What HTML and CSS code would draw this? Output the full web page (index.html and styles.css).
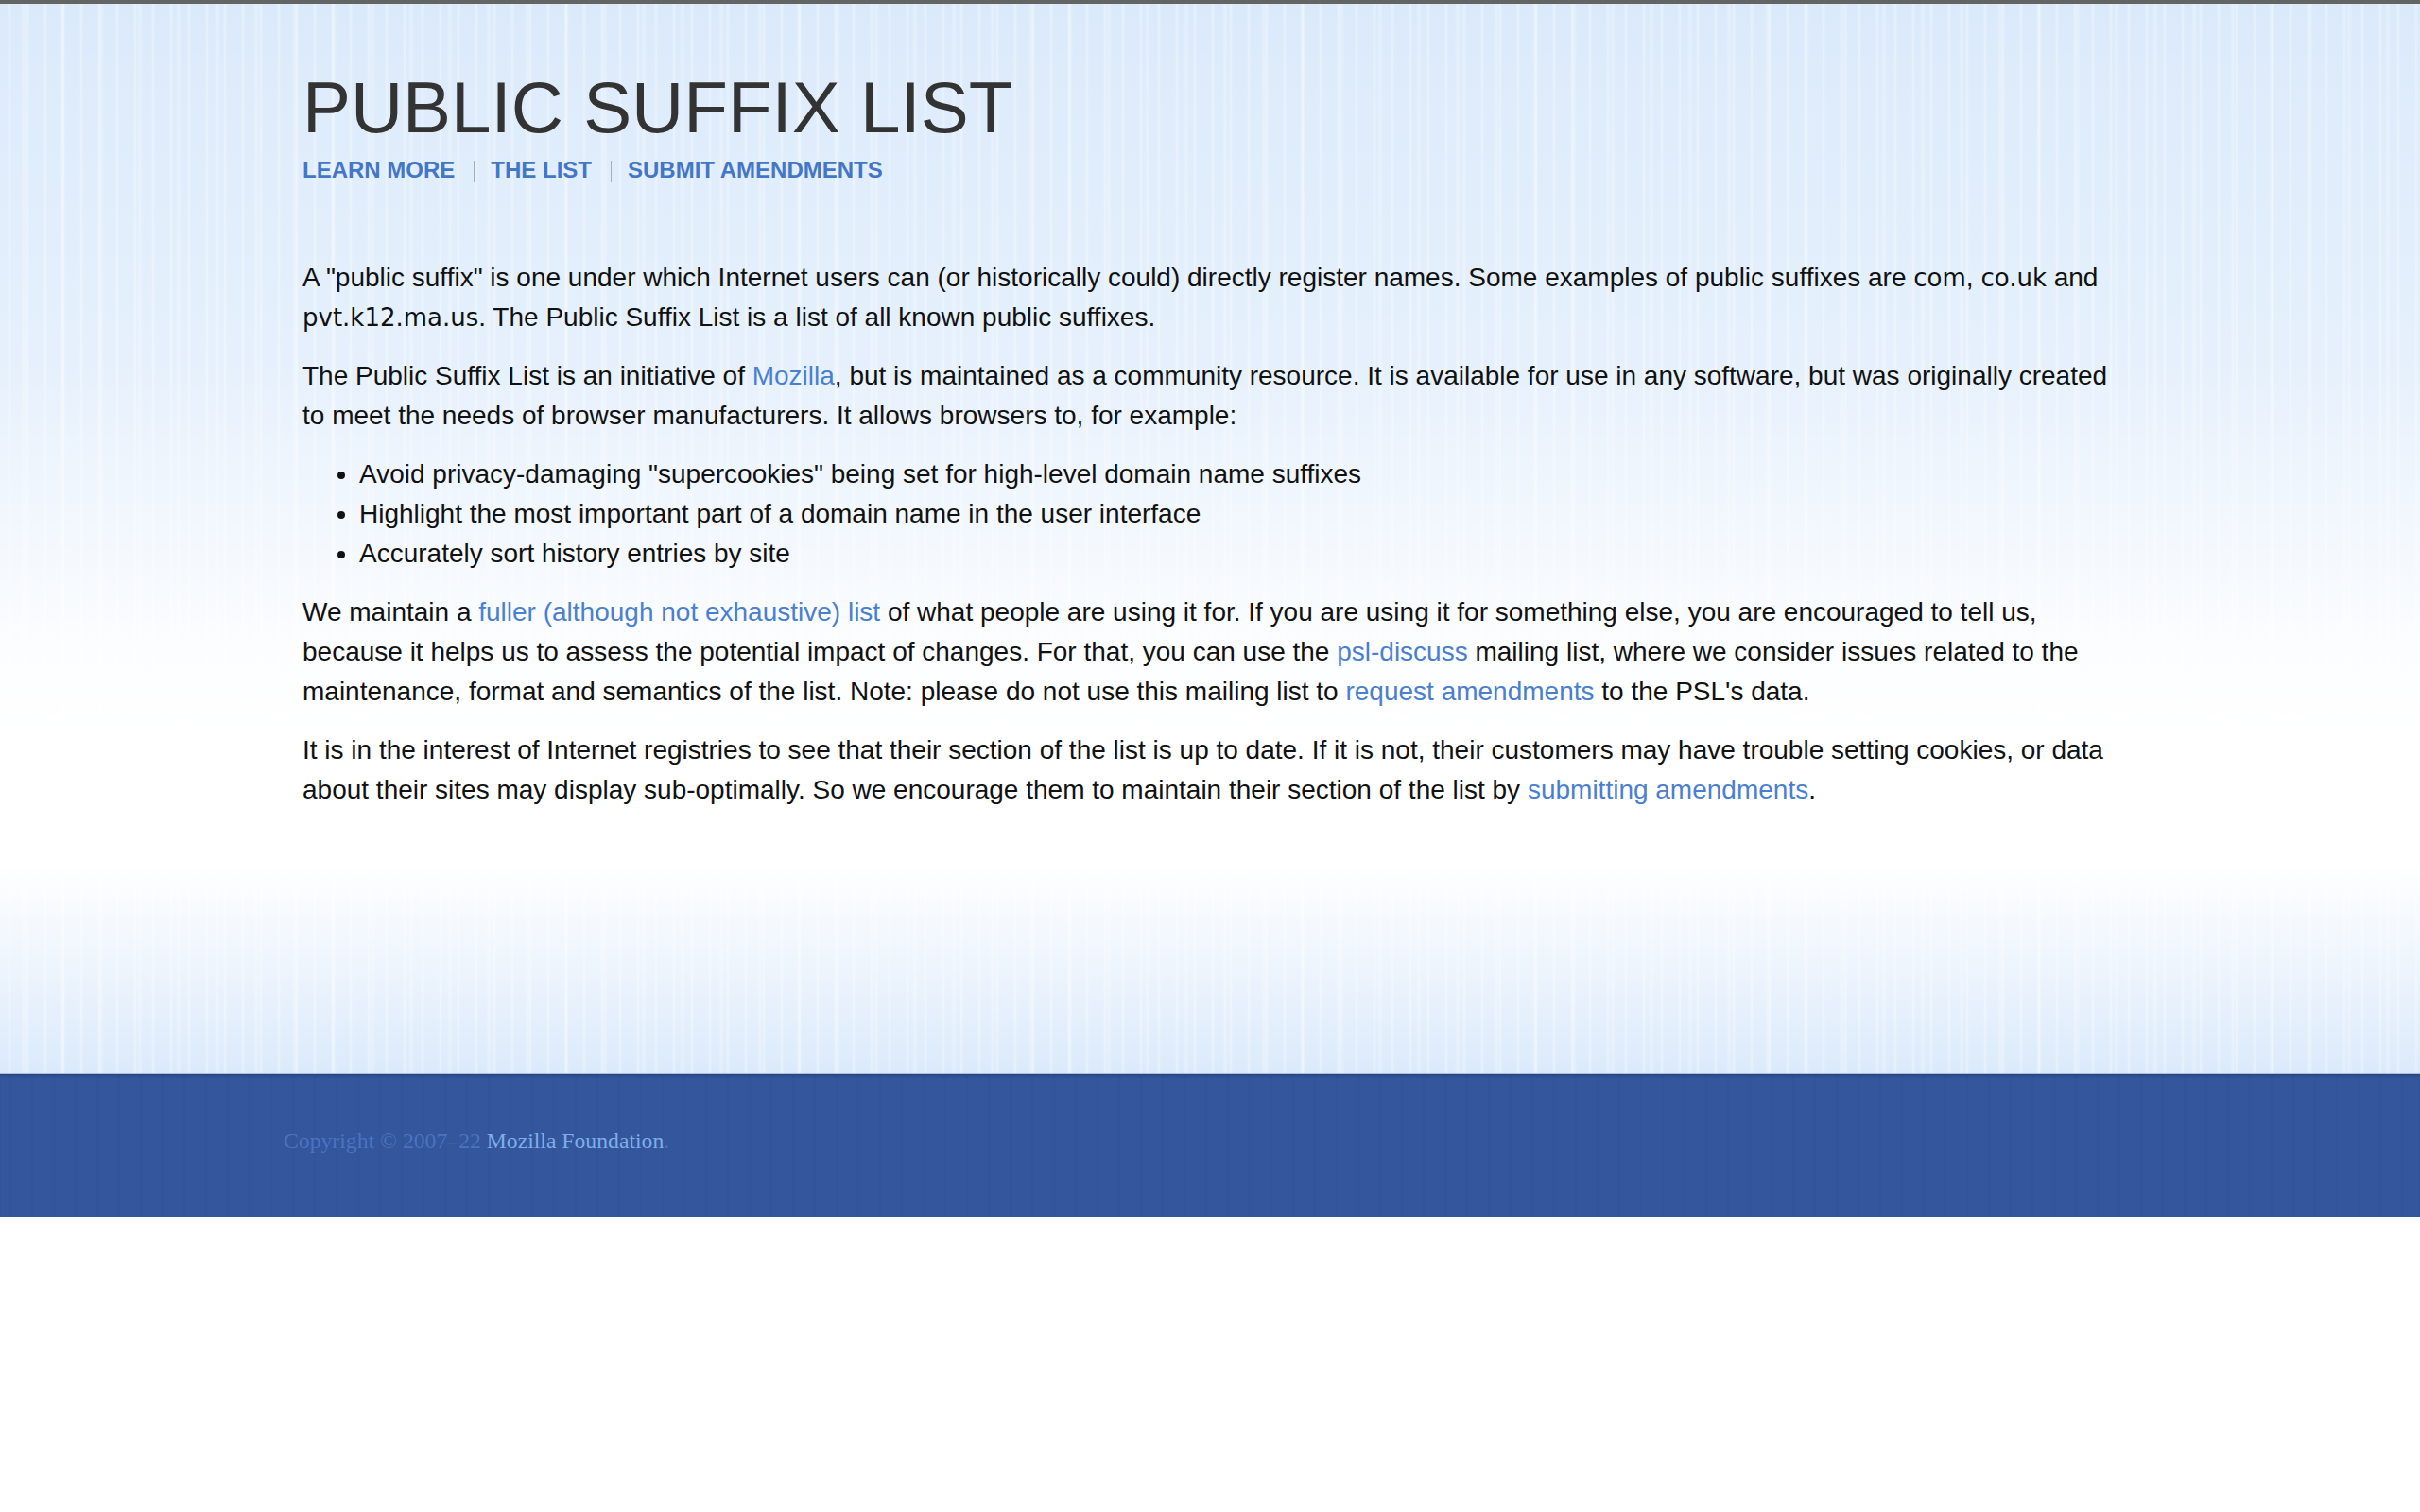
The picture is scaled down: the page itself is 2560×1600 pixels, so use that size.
FILE: index.html
```html
<!DOCTYPE html>
<html lang="en">
<head>
    <meta charset="UTF-8">
    <title>Public Suffix List</title>
    <link rel="stylesheet" href="styles.css">
</head>
<body>
<div class="page">
    <div class="wrap">
        <div class="masthead">
            <h1>PUBLIC SUFFIX LIST</h1>
            <ul class="nav">
                <li><a href="#learn">LEARN MORE</a></li>
                <li><a href="#list">THE LIST</a></li>
                <li><a href="#submit">SUBMIT AMENDMENTS</a></li>
            </ul>
        </div>
        <div class="content">
            <p>A "public suffix" is one under which Internet users can (or historically could) directly register names. Some examples of public suffixes are <code>com</code>, <code>co.uk</code> and <code>pvt.k12.ma.us</code>. The Public Suffix List is a list of all known public suffixes.</p>
            <p>The Public Suffix List is an initiative of <a href="#mozilla">Mozilla</a>, but is maintained as a community resource. It is available for use in any software, but was originally created to meet the needs of browser manufacturers. It allows browsers to, for example:</p>
            <ul>
                <li>Avoid privacy-damaging "supercookies" being set for high-level domain name suffixes</li>
                <li>Highlight the most important part of a domain name in the user interface</li>
                <li>Accurately sort history entries by site</li>
            </ul>
            <p>We maintain a <a href="#learn">fuller (although not exhaustive) list</a> of what people are using it for. If you are using it for something else, you are encouraged to tell us, because it helps us to assess the potential impact of changes. For that, you can use the <a href="#discuss">psl-discuss</a> mailing list, where we consider issues related to the maintenance, format and semantics of the list. Note: please do not use this mailing list to <a href="#submit">request amendments</a> to the PSL's data.</p>
            <p>It is in the interest of Internet registries to see that their section of the list is up to date. If it is not, their customers may have trouble setting cookies, or data about their sites may display sub-optimally. So we encourage them to maintain their section of the list by <a href="#submit">submitting amendments</a>.</p>
        </div>
    </div>
</div>
<div class="footer">
    <div class="footer-inner">
        <p>Copyright &copy; 2007&ndash;22 <a href="#mozilla">Mozilla Foundation</a>.</p>
    </div>
</div>
</body>
</html>
```

FILE: styles.css
```css
html, body {
    margin: 0;
    padding: 0;
    background-color: #ffffff;
}

body {
    font-family: "Liberation Sans", Arial, sans-serif;
    font-size: 28px;
    line-height: 42px;
    color: #111111;
}

a {
    color: #4a7fd0;
    text-decoration: none;
}

.page {
    border-top: 4px solid #646464;
    background:
        linear-gradient(to bottom, rgba(255, 255, 255, 0) 0, rgba(255, 255, 255, 0.3) 380px, rgba(255, 255, 255, 0.92) 690px, #ffffff 780px, #ffffff 910px, rgba(255, 255, 255, 0) 100%),
        repeating-linear-gradient(90deg, rgba(255, 255, 255, 0) 0, rgba(255, 255, 255, 0) 8px, rgba(255, 255, 255, 0.38) 10px, rgba(255, 255, 255, 0) 12px, rgba(255, 255, 255, 0) 19px),
        repeating-linear-gradient(90deg, rgba(255, 255, 255, 0) 0, rgba(255, 255, 255, 0) 22px, rgba(255, 255, 255, 0.3) 25px, rgba(255, 255, 255, 0) 28px, rgba(255, 255, 255, 0) 41px),
        #dbeafb;
}

.wrap {
    width: 1920px;
    margin: 0 auto;
    padding: 72px 0 0 0;
}

.masthead h1 {
    margin: 0;
    font-size: 76.4px;
    line-height: 76px;
    font-weight: normal;
    color: #333333;
}

.nav {
    display: flex;
    margin: 13px 0 0 0;
    padding: 0;
    list-style: none;
    font-size: 24px;
    line-height: 30px;
    font-weight: bold;
}

.nav li {
    display: flex;
    align-items: center;
}

.nav li + li::before {
    content: "";
    display: block;
    width: 1px;
    height: 23px;
    margin: 2px 17px 0 20px;
    background-color: #a6adb6;
}

.nav a {
    color: #4376c6;
}

.content {
    padding: 78px 0 278px 0;
}

.content p {
    margin: 0 0 20px 0;
}

.content p:last-child {
    margin-bottom: 0;
}

.content ul {
    margin: 0 0 20px 0;
    padding-left: 60px;
}

code {
    font-family: "DejaVu Sans", sans-serif;
    font-size: 26px;
}

.footer {
    border-top: 2px solid #a9bcdc;
    background:
        repeating-linear-gradient(90deg, rgba(0, 0, 0, 0) 0, rgba(0, 0, 0, 0) 9px, rgba(0, 0, 0, 0.035) 11px, rgba(0, 0, 0, 0) 13px, rgba(0, 0, 0, 0) 23px),
        #33569d;
    box-shadow: inset 0 3px 3px -1px rgba(0, 0, 0, 0.18);
}

.footer-inner {
    width: 1960px;
    margin: 0 auto;
    padding: 56px 0 66px 0;
}

.footer p {
    margin: 0;
    font-family: "Liberation Serif", "Times New Roman", serif;
    font-size: 23.7px;
    line-height: 29px;
    color: #4b73bf;
}

.footer a {
    color: #7fade9;
}
```
